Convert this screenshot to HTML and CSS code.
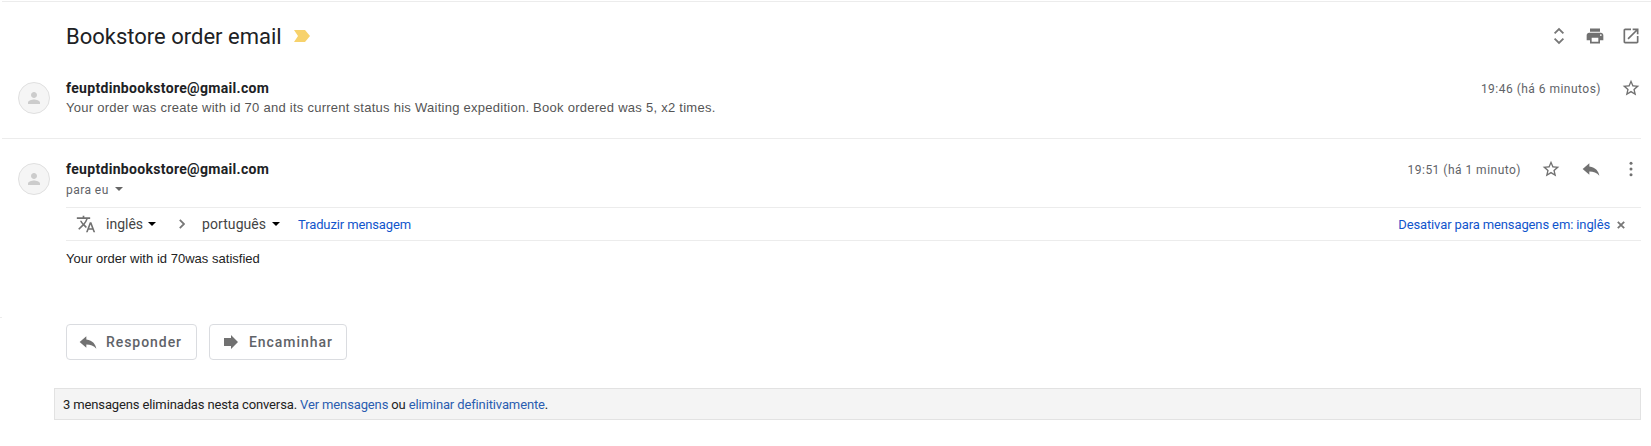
FILE: index.html
```html
<!DOCTYPE html>
<html lang="pt">
<head>
<meta charset="utf-8">
<title>Bookstore order email</title>
<link rel="stylesheet" href="styles.css">
</head>
<body>
<main class="thread">
  <header class="subject">
    <h1 class="subject-title">Bookstore order email</h1>
    <svg class="tag" width="16" height="12" viewBox="0 0 16 12"><path d="M0 0h11l5 6-5 6H0l4-6z" fill="#f7d26c"/></svg>
    <div class="tools">
      <svg class="unfold" width="20" height="20" viewBox="0 0 20 20"><path d="M5.600 7.300 10 3l4.400 4.300M5.600 12.700 10 17l4.400-4.300"/></svg>
      <svg width="20" height="20" viewBox="0 0 24 24"><path d="M19 8H5c-1.66 0-3 1.34-3 3v6h4v4h12v-4h4v-6c0-1.66-1.34-3-3-3zm-3 11H8v-5h8v5zm3-7c-.55 0-1-.45-1-1s.45-1 1-1 1 .45 1 1-.45 1-1 1zm-1-9H6v4h12V3z"/></svg>
      <svg width="20" height="20" viewBox="0 0 24 24"><path d="M19 19H5V5h7V3H5c-1.11 0-2 .9-2 2v14c0 1.1.89 2 2 2h14c1.1 0 2-.9 2-2v-7h-2v7zM14 3v2h3.59l-9.83 9.83 1.41 1.41L19 6.41V10h2V3h-7z"/></svg>
    </div>
  </header>

  <article class="message collapsed">
    <div class="avatar"><svg width="18" height="18" viewBox="0 0 24 24"><path d="M12 12c2.21 0 4-1.79 4-4s-1.79-4-4-4-4 1.79-4 4 1.79 4 4 4zm0 2c-2.67 0-8 1.34-8 4v2h16v-2c0-2.66-5.33-4-8-4z"/></svg></div>
    <div class="who">
      <div class="sender">feuptdinbookstore@gmail.com</div>
      <div class="snippet">Your order was create with id 70 and its current status his Waiting expedition. Book ordered was 5, x2 times.</div>
    </div>
    <div class="meta">
      <span class="time">19:46 (há 6 minutos)</span>
      <svg width="20" height="20" viewBox="0 0 24 24"><path d="M22 9.24l-7.19-.62L12 2 9.19 8.63 2 9.24l5.46 4.73L5.82 21 12 17.27 18.18 21l-1.63-7.03L22 9.24zM12 15.4l-3.76 2.27 1-4.28-3.32-2.88 4.38-.38L12 6.1l1.71 4.04 4.38.38-3.32 2.88 1 4.28L12 15.4z"/></svg>
    </div>
  </article>

  <article class="message open">
    <div class="avatar"><svg width="18" height="18" viewBox="0 0 24 24"><path d="M12 12c2.21 0 4-1.79 4-4s-1.79-4-4-4-4 1.79-4 4 1.79 4 4 4zm0 2c-2.67 0-8 1.34-8 4v2h16v-2c0-2.66-5.33-4-8-4z"/></svg></div>
    <div class="who">
      <div class="sender">feuptdinbookstore@gmail.com</div>
      <div class="to">para eu <i class="caret soft"></i></div>
    </div>
    <div class="meta">
      <span class="time">19:51 (há 1 minuto)</span>
      <svg width="20" height="20" viewBox="0 0 24 24"><path d="M22 9.24l-7.19-.62L12 2 9.19 8.63 2 9.24l5.46 4.73L5.82 21 12 17.27 18.18 21l-1.63-7.03L22 9.24zM12 15.4l-3.76 2.27 1-4.28-3.32-2.88 4.38-.38L12 6.1l1.71 4.04 4.38.38-3.32 2.88 1 4.28L12 15.4z"/></svg>
      <svg width="20" height="20" viewBox="0 0 24 24"><path d="M10 9V5l-8 7 8 7v-4.1c5 0 9 1.600 12 5.100-1-5-4-10-12-11z"/></svg>
      <svg width="20" height="20" viewBox="0 0 20 20"><circle cx="10" cy="4.200" r="1.500"/><circle cx="10" cy="10" r="1.500"/><circle cx="10" cy="15.800" r="1.500"/></svg>
    </div>
  </article>

  <section class="translate">
    <svg class="lang-icon" width="20" height="20" viewBox="0 0 24 24"><path d="M12.870 15.070l-2.540-2.510.03-.03c1.740-1.940 2.980-4.170 3.710-6.530H17V4h-7V2H8v2H1v1.990h11.170C11.500 7.920 10.440 9.750 9 11.350 8.070 10.320 7.300 9.190 6.690 8h-2c.73 1.630 1.730 3.170 2.980 4.560l-5.090 5.020L4 19l5-5 3.110 3.110.76-2.040zM18.500 10h-2L12 22h2l1.120-3h4.750L21 22h2l-4.500-12zm-2.620 7l1.620-4.330L19.120 17h-3.240z"/></svg>
    <span class="lang from">inglês</span><i class="caret"></i>
    <svg class="chevron" width="6" height="10" viewBox="0 0 6 10"><path d="M.8.8 5 5 .8 9.200"/></svg>
    <span class="lang into">português</span><i class="caret"></i>
    <a class="action">Traduzir mensagem</a>
    <a class="disable">Desativar para mensagens em: inglês</a>
    <svg class="close" width="8" height="8" viewBox="0 0 8 8"><path d="M.8.8l6.400 6.400M7.200.8.8 7.200"/></svg>
  </section>

  <p class="body">Your order with id 70was satisfied</p>
  <div class="edge"></div>

  <div class="buttons">
    <button class="btn reply"><svg width="20" height="20" viewBox="0 0 24 24"><path d="M10 9V5l-8 7 8 7v-4.100c5 0 9 1.600 12 5.100-1-5-4-10-12-11z"/></svg><span>Responder</span></button>
    <button class="btn forward"><svg width="20" height="20" viewBox="0 0 20 20"><path d="M3 6h7V3l7 7-7 7v-3H3z"/></svg><span>Encaminhar</span></button>
  </div>

  <footer class="deleted">3 mensagens eliminadas nesta conversa. <a>Ver mensagens</a> ou <a>eliminar definitivamente</a>.</footer>
</main>
</body>
</html>
```

FILE: styles.css
```css
* { box-sizing: border-box; }
body {
  margin: 0;
  background: #fff;
  color: #202124;
  font-family: Roboto, "Liberation Sans", sans-serif;
}
svg { display: block; flex: none; fill: #717171; }
.thread { padding-top: 1px; }

.subject {
  display: flex;
  align-items: center;
  height: 70px;
  margin-left: 2px;
  padding: 0 0 1px 64px;
  border-top: 1px solid #ececec;
}
.subject-title {
  width: 216px;
  margin: 0;
  padding-top: 1px;
  font-size: 22px;
  line-height: 28px;
  font-weight: 400;
  white-space: nowrap;
}
.tag { margin-left: 12px; }
.tools { display: flex; gap: 16px; margin-left: auto; padding-right: 10px; }

.message { display: flex; margin-left: 2px; padding-left: 16px; }
.collapsed {
  height: 68px;
  margin-right: 10px;
  padding-top: 7px;
  border-bottom: 1px solid #ececec;
}
.open { height: 68px; margin-right: 10px; padding-top: 20px; }
.avatar {
  display: grid;
  place-items: center;
  flex: none;
  width: 32px;
  height: 32px;
  margin-top: 4px;
  border: 1px solid #e0e0e0;
  border-radius: 50%;
  background: #f5f5f5;
}
.avatar svg { fill: #ccc; }
.who { margin-left: 16px; white-space: nowrap; }
.sender { font-size: 14px; line-height: 20px; font-weight: 700; letter-spacing: .32px; }
.snippet {
  color: #555;
  font: 13px/20px "Liberation Sans", Arial, sans-serif;
  letter-spacing: .26px;
}
.to {
  display: flex;
  align-items: center;
  color: #5f6368;
  font-size: 12px;
  line-height: 22px;
  letter-spacing: .45px;
}
.meta { display: flex; align-items: center; gap: 20px; height: 20px; margin-left: auto; }
.time {
  padding-top: 2px;
  color: #5f6368;
  font-size: 12px;
  letter-spacing: .48px;
  white-space: nowrap;
}

.caret {
  width: 0;
  height: 0;
  border: 4px solid transparent;
  border-top-color: #000;
  border-bottom: 0;
}
.caret.soft { margin: -2px 0 0 6px; border-top-color: #666; }

.translate {
  display: flex;
  align-items: center;
  height: 34px;
  margin: 0 10px 0 66px;
  padding-left: 10px;
  border: solid #ececec;
  border-width: 1px 0;
  font-size: 13px;
  letter-spacing: -.12px;
}
.lang { color: #444; font-size: 14px; letter-spacing: 0; }
.from { width: 36px; margin-left: 10px; }
.into { width: 64px; margin-left: 17px; letter-spacing: .08px; }
.lang + .caret { margin-left: 6px; }
.chevron { margin-left: 23px; }
.chevron path, .close path, .unfold path { fill: none; stroke: #777; stroke-width: 1.8; }
.translate a { color: #15c; }
.action { margin-left: 18px; }
.disable { margin-left: auto; }
.close { margin: 1px 16px 0 7px; }

.body {
  height: 76px;
  margin: 0 0 0 66px;
  padding-top: 8px;
  color: #222;
  font: 13px/20px "Liberation Sans", Arial, sans-serif;
  letter-spacing: .02px;
}
.edge { width: 2px; height: 1px; background: #ececec; }

.buttons { display: flex; gap: 12px; margin: 6px 0 0 66px; }
.btn {
  display: flex;
  align-items: center;
  height: 36px;
  padding: 0 0 0 11px;
  border: 1px solid #dadce0;
  border-radius: 4px;
  background: #fff;
  color: #5f6368;
  font: 500 14px Roboto, sans-serif;
  letter-spacing: .95px;
}
.btn svg { margin-right: 8px; }
.reply { width: 131px; }
.forward { width: 138px; }

.deleted {
  height: 32px;
  margin: 28px 10px 0 54px;
  padding-left: 8px;
  border: 1px solid #e2e2e2;
  background: #f4f4f4;
  color: #222;
  font-size: 13px;
  line-height: 31px;
  letter-spacing: -.13px;
}
.deleted a { color: #2a5db0; }
```
